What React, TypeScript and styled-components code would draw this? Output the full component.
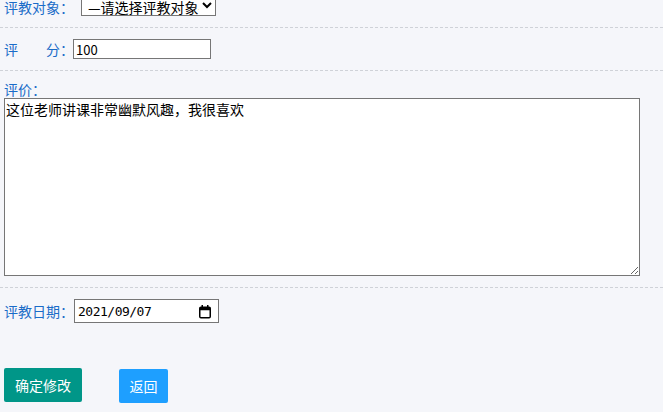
import React from 'react';
import styled, { createGlobalStyle } from 'styled-components';

const GlobalStyle = createGlobalStyle`
  html, body {
    margin: 0;
    background: #f5f6fa;
    overflow: hidden;
  }
  body {
    font-family: 'Noto Sans CJK SC', 'Noto Sans', sans-serif;
  }
`;

const Form = styled.form`
  width: 663px;
`;

const Row = styled.div<{ $last?: boolean; $first?: boolean }>`
  display: flex;
  align-items: ${({ $first }) => ($first ? 'flex-end' : 'center')};
  padding: 11px 23px 11px 4px;
  margin-top: ${({ $first }) => ($first ? '-16px' : '0')};
  border-bottom: ${({ $last }) => ($last ? 'none' : '1px dashed #cfd2d8')};
`;

const BlockRow = styled(Row)`
  display: block;
  padding-top: 10px;
`;

const Label = styled.label`
  font-size: 14px;
  line-height: 17px;
  color: #1a6cc8;
  white-space: pre;
`;

const BlockLabel = styled(Label)`
  display: block;
  line-height: 16px;
`;

const Select = styled.select`
  width: 135px;
  height: 21px;
  margin-left: 7px;
  font-family: 'Noto Sans CJK SC', sans-serif;
  font-size: 14px;
  color: #000;
  background: #fff;
  border: 1px solid #767676;
  padding: 0 0 0 2px;
`;

const TextInput = styled.input`
  width: 138px;
  height: 20px;
  box-sizing: border-box;
  margin-left: -1px;
  padding: 1px 2px;
  font-family: 'Noto Sans CJK SC', sans-serif;
  font-size: 13px;
  border: 1px solid #767676;
  background: #fff;
`;

const DateField = styled.div`
  display: flex;
  align-items: center;
  width: 145px;
  height: 24px;
  box-sizing: border-box;
  padding: 0 6px 0 3px;
  border: 1px solid #767676;
  background: #fff;
`;

const DateText = styled.input`
  flex: 1;
  min-width: 0;
  border: none;
  outline: none;
  padding: 0;
  background: transparent;
  font-family: 'DejaVu Sans Mono', monospace;
  font-size: 13px;
  letter-spacing: -0.5px;
  color: #000;
`;

const CalendarIcon = () => (
  <svg width="14" height="15" viewBox="0 0 14 15" aria-hidden="true">
    <rect x="1.75" y="3.25" width="10.5" height="10.5" rx="1.25" fill="none" stroke="#000" strokeWidth="1.5" />
    <rect x="1.75" y="3.25" width="10.5" height="3" fill="#000" />
    <rect x="3.5" y="1" width="1.5" height="3" fill="#000" />
    <rect x="9" y="1" width="1.5" height="3" fill="#000" />
  </svg>
);

const TextArea = styled.textarea`
  display: block;
  width: 100%;
  height: 178px;
  box-sizing: border-box;
  margin: 1px 0 0;
  padding: 1px 1px;
  font-family: 'Noto Sans CJK SC', sans-serif;
  font-size: 14px;
  line-height: 18px;
  border: 1px solid #767676;
  background: #fff;
`;

const Actions = styled.div`
  display: flex;
  align-items: flex-start;
  gap: 37px;
  padding: 34px 4px 0;
`;

const Button = styled.button<{ $tone: 'teal' | 'blue'; $offset?: number }>`
  height: 34px;
  padding: 0 ${({ $tone }) => ($tone === 'teal' ? '11px' : '10.5px')};
  margin-top: ${({ $offset }) => $offset ?? 0}px;
  border: none;
  border-radius: 2px;
  background: ${({ $tone }) => ($tone === 'teal' ? '#009688' : '#1e9fff')};
  color: #fff;
  font-family: 'Noto Sans CJK SC', sans-serif;
  font-size: 14px;
  cursor: pointer;
`;

export default function App() {
  return (
    <>
      <GlobalStyle />
      <Form>
        <Row $first>
          <Label>评教对象：</Label>
          <Select defaultValue="">
            <option value="">—请选择评教对象—</option>
          </Select>
        </Row>
        <Row>
          <Label>评　　分：</Label>
          <TextInput type="text" defaultValue="100" />
        </Row>
        <BlockRow>
          <BlockLabel>评价：</BlockLabel>
          <TextArea defaultValue="这位老师讲课非常幽默风趣，我很喜欢" />
        </BlockRow>
        <Row $last>
          <Label>评教日期：</Label>
          <DateField>
            <DateText type="text" defaultValue="2021/09/07" />
            <CalendarIcon />
          </DateField>
        </Row>
        <Actions>
          <Button type="button" $tone="teal">确定修改</Button>
          <Button type="button" $tone="blue" $offset={1}>返回</Button>
        </Actions>
      </Form>
    </>
  );
}
